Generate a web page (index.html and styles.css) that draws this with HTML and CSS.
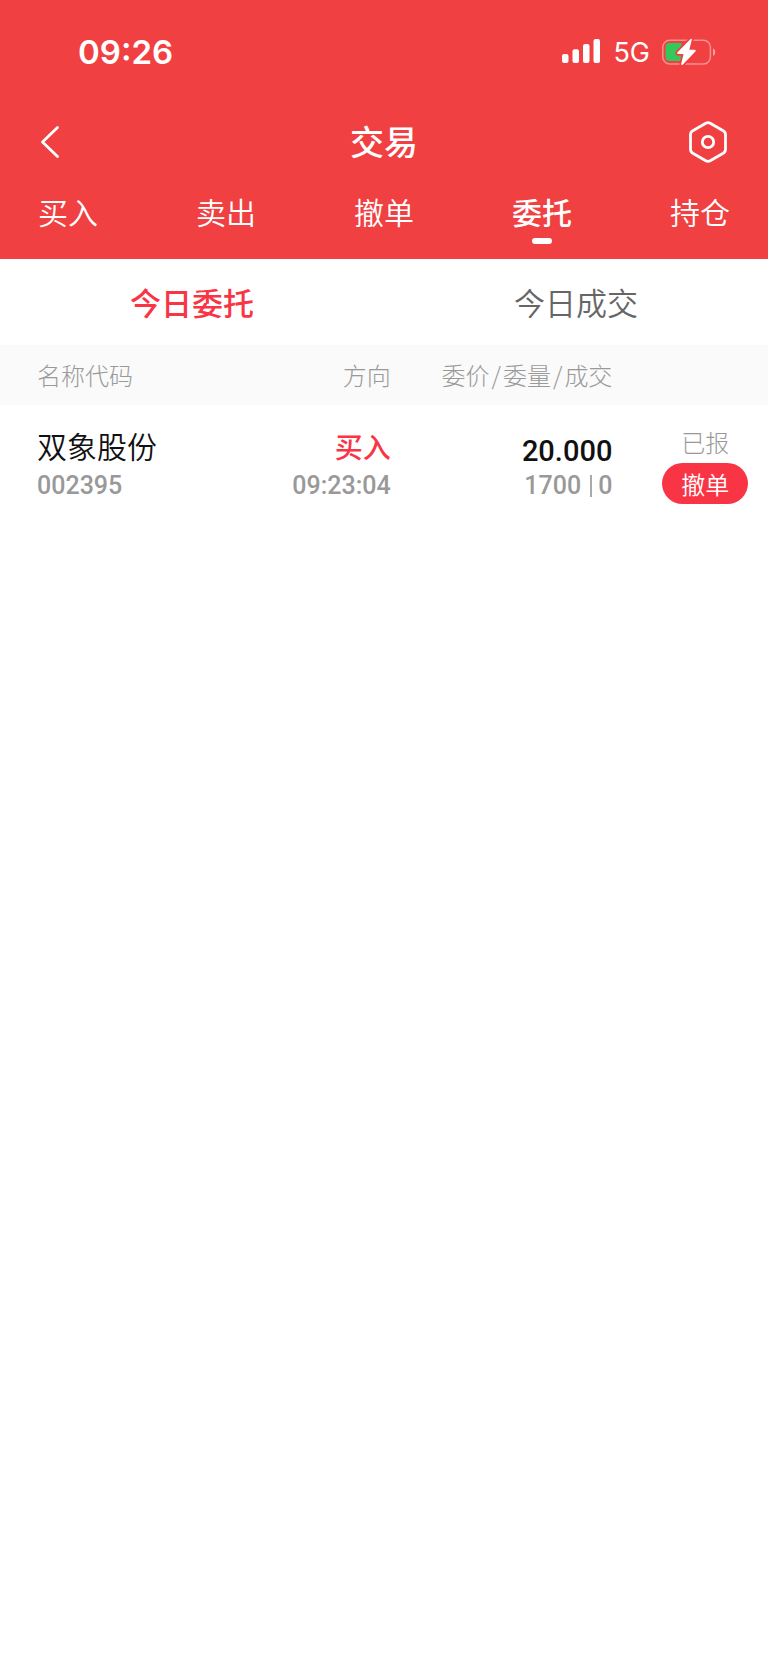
FILE: index.html
```html
<!DOCTYPE html>
<html lang="zh-CN">
<head>
<meta charset="utf-8">
<meta name="viewport" content="width=device-width, initial-scale=1">
<title>交易</title>
<link rel="stylesheet" href="styles.css">
</head>
<body>
<header class="header">
  <div class="status-bar">
    <time class="clock">09:26</time>
    <div class="status-icons">
      <svg class="signal" width="39" height="25" viewBox="0 0 39 25" fill="#fff" aria-hidden="true">
        <rect x="0" y="15" width="6.5" height="9" rx="2"/>
        <rect x="10.5" y="10.3" width="6.5" height="13.7" rx="2"/>
        <rect x="21" y="5" width="6.5" height="19" rx="2"/>
        <rect x="31.5" y="0" width="6.5" height="24" rx="2"/>
      </svg>
      <span class="network">5G</span>
      <svg class="battery" width="54" height="28" viewBox="0 0 54 28" aria-hidden="true">
        <rect x="0.8" y="2.2" width="47.6" height="23.8" rx="7" fill="none" stroke="#fff" stroke-opacity=".42" stroke-width="1.5"/>
        <path d="M51 10.5c3 1.2 3 6 0 7.500z" fill="#fff" fill-opacity=".5"/>
        <path d="M7.500 5h12v18h-12q-4 0-4-4V9q0-4 4-4z" fill="#34c759"/>
        <path d="M28.300 1.200 15.300 14.500q-.9 1.200.8 1.400h5.400l-2.300 10.200q0 1.400 1.500.6l12.900-13.500q.9-1.400-.8-1.500h-5.500L29.800 1.700q.1-1.500-1.500-.5z" fill="#fff" stroke="#f04042" stroke-width="3.500" paint-order="stroke"/>
      </svg>
    </div>
  </div>
  <div class="title-bar">
    <button class="icon-button" type="button" aria-label="返回">
      <svg width="20" height="34" viewBox="0 0 20 34" fill="none" stroke="#fff" stroke-width="2.800" stroke-linecap="round" stroke-linejoin="round" aria-hidden="true"><path d="M17.500 2.500 2.500 17l15 14.500"/></svg>
    </button>
    <h1 class="title">交易</h1>
    <button class="icon-button icon-button-end" type="button" aria-label="设置">
      <svg width="40" height="42" viewBox="0 0 40 42" fill="none" stroke="#fff" stroke-width="2.800" stroke-linejoin="round" aria-hidden="true">
        <path d="M17.800 2.300q2.200-1.200 4.400 0l13 7.500q2.300 1.300 2.300 3.900v14.600q0 2.600-2.300 3.900l-13 7.500q-2.200 1.200-4.400 0l-13-7.500q-2.300-1.300-2.300-3.900V13.700q0-2.600 2.300-3.900z"/>
        <circle cx="20" cy="21" r="5.700"/>
      </svg>
    </button>
  </div>
  <nav class="tabs">
    <a class="tab" href="#buy">买入</a>
    <a class="tab" href="#sell">卖出</a>
    <a class="tab" href="#cancel">撤单</a>
    <a class="tab tab-active" href="#orders" aria-current="page">委托</a>
    <a class="tab" href="#positions">持仓</a>
  </nav>
</header>
<main>
  <nav class="subtabs">
    <a class="subtab subtab-active" href="#today-orders" aria-current="true">今日委托</a>
    <a class="subtab" href="#today-deals">今日成交</a>
  </nav>
  <table class="orders">
    <thead>
      <tr>
        <th class="col-name" scope="col">名称代码</th>
        <th class="col-side" scope="col">方向</th>
        <th class="col-price" scope="col">委价<span class="slash">/</span>委量<span class="slash">/</span>成交</th>
        <td class="col-status"></td>
      </tr>
    </thead>
    <tbody>
      <tr>
        <td class="col-name"><div class="stock">双象股份</div><div class="minor">002395</div></td>
        <td class="col-side"><div class="side">买入</div><div class="minor">09:23:04</div></td>
        <td class="col-price"><div class="price">20.000</div><div class="minor volume"><span>1700</span><span class="filled">0</span></div></td>
        <td class="col-status"><div class="state">已报</div><button class="cancel" type="button">撤单</button></td>
      </tr>
    </tbody>
  </table>
</main>
</body>
</html>
```

FILE: styles.css
```css
* {
  box-sizing: border-box;
}

body {
  margin: 0;
  background: #fff;
  color: #111;
  font-family: "Noto Sans CJK SC", sans-serif;
}

a {
  color: inherit;
  text-decoration: none;
}

button {
  border: 0;
  padding: 0;
  background: none;
  color: inherit;
  font-family: inherit;
  cursor: pointer;
}

svg {
  display: block;
}

.header {
  background: #f04042;
  color: #fff;
}

.status-bar {
  display: flex;
  align-items: center;
  justify-content: space-between;
  height: 103px;
  padding: 0 52px 0 78px;
}

.clock {
  font: 600 33px/40px Inter, sans-serif;
}

.status-icons {
  display: flex;
  align-items: center;
  gap: 12px;
}

.network {
  padding-top: 2px;
  font: 400 27px/32px Inter, sans-serif;
}

.title-bar {
  display: grid;
  grid-template-columns: 1fr auto 1fr;
  align-items: center;
  height: 78px;
  padding: 0 40px;
}

.icon-button {
  justify-self: start;
}

.icon-button-end {
  justify-self: end;
}

.title {
  margin: 0;
  padding-bottom: 2px;
  font-size: 34px;
  font-weight: 500;
  line-height: 46px;
}

.tabs {
  display: flex;
  justify-content: space-between;
  height: 78px;
  padding: 8px 38px 0;
}

.tab {
  display: flex;
  flex-direction: column;
  align-items: center;
  gap: 5px;
  font-size: 30px;
  font-weight: 350;
  line-height: 44px;
}

.tab-active {
  font-weight: 500;
}

.tab-active::after {
  content: "";
  width: 20px;
  height: 6px;
  border-radius: 3px;
  background: #fff;
}

.subtabs {
  display: grid;
  grid-template-columns: 1fr 1fr;
}

.subtab {
  color: #666;
  font-size: 31px;
  font-weight: 350;
  line-height: 86px;
  text-align: center;
}

.subtab-active {
  color: #f93545;
  font-weight: 500;
}

.orders {
  width: 100%;
  border-collapse: collapse;
  table-layout: fixed;
}

.orders thead {
  background: #fafafa;
  color: #999;
  font-size: 24px;
  line-height: 60px;
}

.orders th {
  padding: 0;
  font-weight: 300;
  text-align: right;
  white-space: nowrap;
}

.orders td {
  padding: 18px 0 0;
  text-align: right;
  vertical-align: top;
}

.orders thead td {
  padding: 0;
}

.orders .col-name {
  width: 34%;
  padding-left: 37px;
  text-align: left;
}

.orders .col-side {
  width: 17%;
  padding-right: 1px;
}

.orders .col-price {
  width: 29%;
  padding-right: 2px;
}

.slash {
  padding: 0 2px;
}

.orders tbody .col-status {
  padding-right: 20px;
  padding-left: 48px;
  text-align: center;
}

.stock {
  font-size: 30px;
  font-weight: 350;
  line-height: 44px;
}

.side {
  padding-top: 2px;
  color: #f93545;
  font-size: 28px;
  font-weight: 500;
  line-height: 42px;
}

.price {
  padding-top: 12px;
  font-family: Roboto, sans-serif;
  font-size: 29px;
  font-weight: 500;
  line-height: 32px;
}

.minor {
  color: #999;
  font-family: Roboto, sans-serif;
  font-size: 25px;
  font-weight: 500;
  line-height: 38px;
}

.volume {
  display: flex;
  align-items: center;
  justify-content: flex-end;
  gap: 9px;
}

.filled {
  display: flex;
  align-items: center;
  gap: 6px;
}

.filled::before {
  content: "";
  width: 2px;
  height: 22px;
  background: #aaa;
}

.state {
  color: #999;
  font-size: 24px;
  font-weight: 300;
  line-height: 38px;
}

.cancel {
  width: 100%;
  margin-top: 2px;
  border-radius: 21px;
  background: #f93545;
  color: #fff;
  font-size: 24px;
  font-weight: 350;
  line-height: 41px;
}
```
